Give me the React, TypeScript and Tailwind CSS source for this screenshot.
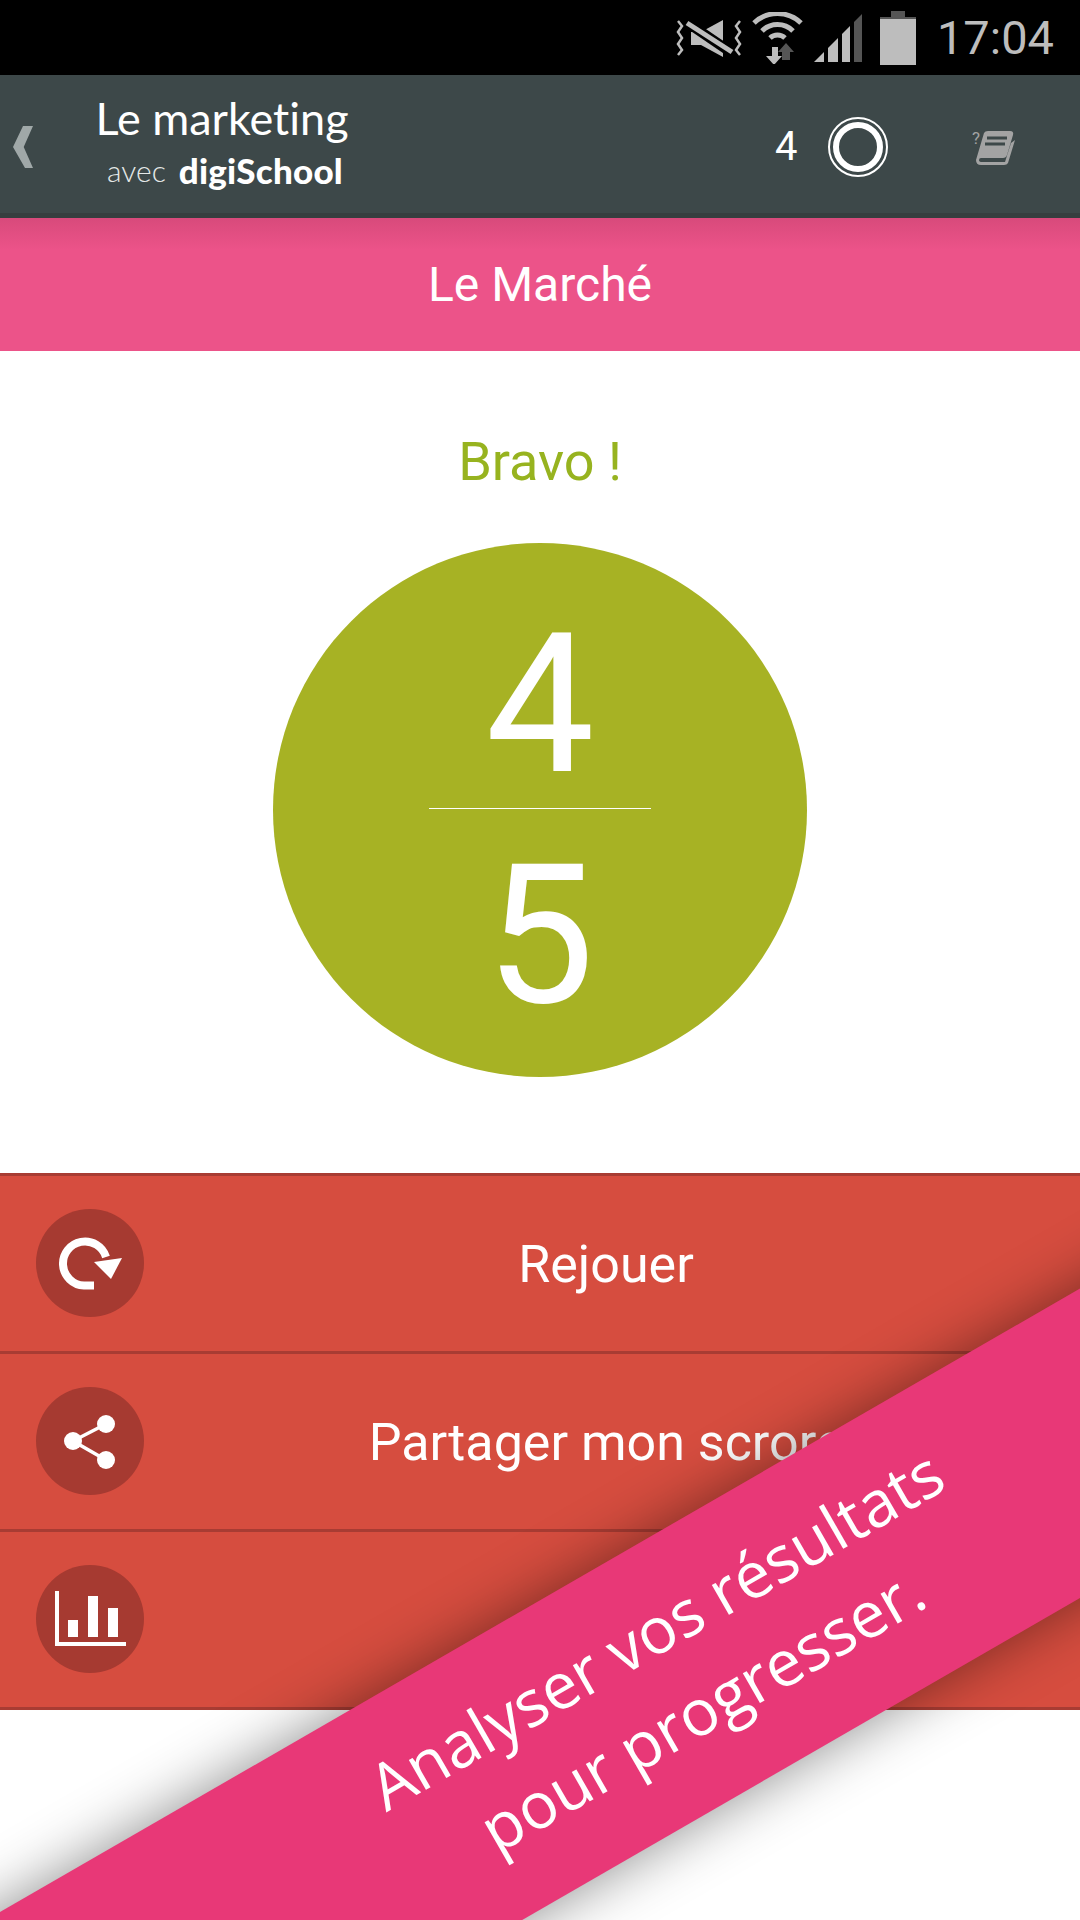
const rows = [
  { id: 'replay', label: 'Rejouer', icon: <ReplayIcon /> },
  { id: 'share', label: 'Partager mon scrore', icon: <ShareIcon /> },
  { id: 'stats', label: '', icon: <StatsIcon /> },
];

function ReplayIcon() {
  return (
    <svg viewBox="0 0 108 108" className="w-[108px] h-[108px]">
      <path d="M58 76.5 H48 A22 22 0 1 1 70 48" fill="none" stroke="#fff" strokeWidth="8" />
      <polygon points="58,53 86,49 75,70" fill="#fff" />
    </svg>
  );
}

function ShareIcon() {
  return (
    <svg viewBox="0 0 108 108" className="w-[108px] h-[108px]">
      <path d="M70 37 L37 54 L70 73" fill="none" stroke="#fff" strokeWidth="3.5" />
      <circle cx="70" cy="37" r="9" fill="#fff" />
      <circle cx="37" cy="54" r="9" fill="#fff" />
      <circle cx="70" cy="73" r="9" fill="#fff" />
    </svg>
  );
}

function StatsIcon() {
  return (
    <svg viewBox="0 0 108 108" fill="#fff" className="w-[108px] h-[108px]">
      <path d="M19 26h4v51h67v4H19z" />
      <rect x="32" y="55" width="10" height="17" />
      <rect x="52" y="31" width="10" height="41" />
      <rect x="72" y="43" width="10" height="29" />
    </svg>
  );
}

function StatusIcons() {
  return (
    <>
      {/* vibrate / muted */}
      <svg viewBox="0 0 68 40" className="w-[68px] h-[40px]">
        <path d="M3 3l4 5-4 6 4 6-4 6 4 6-4 5M65 3l-4 5 4 6-4 6 4 6-4 6 4 5" fill="none" stroke="#bdbdbd" strokeWidth="2.5" />
        <polygon points="16,14 26,14 48,2 48,39 26,27 16,27" fill="#bdbdbd" />
        <path d="M13 5 L57 35" stroke="#000" strokeWidth="10" />
        <path d="M12 5 L57 34" stroke="#bdbdbd" strokeWidth="5" />
      </svg>
      {/* wifi */}
      <svg viewBox="0 0 51 52" className="ml-[9px] w-[51px] h-[52px]">
        <path d="M2 11 A34 34 0 0 1 49 11" fill="none" stroke="#bdbdbd" strokeWidth="5" />
        <path d="M10 19 A22 22 0 0 1 41 19" fill="none" stroke="#bdbdbd" strokeWidth="5" />
        <path d="M18 26 A11 11 0 0 1 33 26" fill="none" stroke="#bdbdbd" strokeWidth="5" />
        <polygon points="34,31 42,40 38,40 38,48 30,48 30,40 26,40" fill="#555" />
        <polygon points="20,35 26,35 26,44 30,44 22,53 14,44 20,44" fill="#bdbdbd" />
      </svg>
      {/* signal */}
      <svg viewBox="0 0 48 48" className="ml-[11px] w-[48px] h-[48px]">
        <polygon points="0,48 10,38 10,48" fill="#bdbdbd" />
        <polygon points="14,34 24,24 24,48 14,48" fill="#bdbdbd" />
        <polygon points="28,20 36,12 36,48 28,48" fill="#bdbdbd" />
        <polygon points="40,8 48,0 48,48 40,48" fill="#555" />
      </svg>
      {/* battery */}
      <svg viewBox="0 0 36 54" className="ml-[18px] w-[36px] h-[54px]">
        <rect x="11" y="0" width="14" height="6" fill="#555" />
        <rect x="0" y="6" width="36" height="2" fill="#555" />
        <rect x="0" y="8" width="36" height="46" fill="#bdbdbd" />
      </svg>
    </>
  );
}

export default function App() {
  return (
    <div className="relative w-[1080px] h-[1920px] overflow-hidden bg-white font-['Roboto',sans-serif]">
      {/* Status bar */}
      <div className="h-[75px] bg-black flex items-center justify-end pr-[26px]">
        <StatusIcons />
        <span className="ml-[21px] text-[47px] leading-none text-[#bdbdbd]">17:04</span>
      </div>

      {/* App bar */}
      <div className="h-[143px] bg-[#3d4849] flex items-center pt-[5px] border-b-[5px] border-[#373e3f]">
        <svg viewBox="0 0 20 42" className="ml-[13px] w-[20px] h-[42px]">
          <polygon points="10,0 20,0 10.7,21 20,42 12,42 0,21" fill="#a0a8a8" />
        </svg>
        <div className="ml-[62px] w-[254px] pb-[1px] flex flex-col items-center text-white font-['Lato',sans-serif] [font-variant-ligatures:none]">
          <span className="text-[45px] leading-[46px] whitespace-nowrap">Le marketing</span>
          <div className="flex items-center whitespace-nowrap pl-[6px] pt-[3px]">
            <span className="text-[30px] leading-[53px] font-light text-[#e5e8e8]">avec</span>
            <span className="ml-[13px] text-[35px] leading-[53px] font-black tracking-[0.2px]">digiSchool</span>
          </div>
        </div>
        <span className="ml-[426px] text-[40px] leading-none text-white">4</span>
        <div className="ml-[31px] w-[60px] h-[60px] rounded-full border-2 border-white p-[3px]">
          <div className="w-full h-full rounded-full border-[6px] border-white" />
        </div>
        <svg viewBox="0 0 44 36" className="ml-[84px] w-[44px] h-[36px]">
          <text x="0" y="15" fontSize="17" fontFamily="Roboto" fill="#a3a3a3">?</text>
          <path d="M12 4 Q13 2 16 2 H38 Q42 2 41 6 L35 26 Q34 29 31 29 H9 Q7 29 7 31 Q7 33 10 33 H33 L39 14 L43 11 L36 34 Q35 36 32 36 H9 Q4 36 4 31 Z" fill="#a3a3a3" />
          <path d="M15 9 H35 M13 15 H33" stroke="#3d4849" strokeWidth="3" />
        </svg>
      </div>

      {/* Section title */}
      <div className="h-[133px] flex items-center justify-center bg-[linear-gradient(#d84a7b,#ec5389_24%)]">
        <h1 className="text-[48px] leading-none text-white">Le Marché</h1>
      </div>

      {/* Score */}
      <div className="h-[822px] flex flex-col items-center pt-[78px]">
        <p className="text-[54px] leading-[66px] text-[#97b31f]">Bravo !</p>
        <div className="mt-[48px] w-[534px] h-[534px] rounded-full bg-[#a7b224] flex flex-col items-center justify-center pt-[21px] text-white">
          <span className="text-[194px] leading-[190px]">4</span>
          <div className="mt-[8px] mb-[32px] w-[222px] h-px bg-white" />
          <span className="text-[194px] leading-[190px]">5</span>
        </div>
      </div>

      {/* Actions */}
      <div className="border-b-[3px] border-[#a83c33]">
        {rows.map((row) => (
          <div key={row.id} className="h-[178px] border-t-[3px] border-[#a83c33] bg-[#d64d3f] flex items-center pl-[36px] pr-[12px] pb-[2px]">
            <div className="w-[108px] h-[108px] rounded-full bg-[#a63a31]">{row.icon}</div>
            <span className="flex-1 mt-[4px] text-center text-[52px] leading-none text-white">{row.label}</span>
          </div>
        ))}
      </div>

      {/* Diagonal banner */}
      <div className="absolute left-[-260px] top-[1621px] w-[1600px] h-[268px] -rotate-30 bg-[#e83877] shadow-[0_0_60px_rgba(0,0,0,0.45)] flex items-center justify-center pl-[326px] pb-[10px]">
        <p className="text-center text-[64px] leading-[92px] text-white font-['Open_Sans',sans-serif]">
          Analyser vos résultats
          <br />
          pour progresser.
        </p>
      </div>
    </div>
  );
}
